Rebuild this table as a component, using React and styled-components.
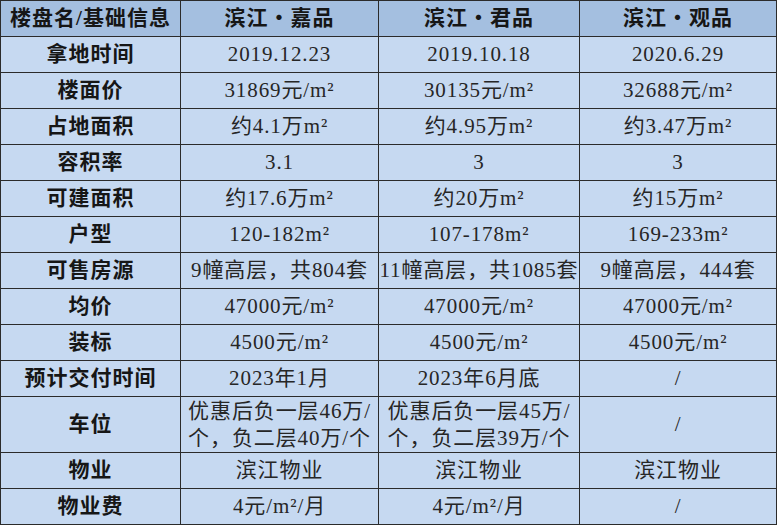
import React from "react";
import styled, { createGlobalStyle } from "styled-components";

const GlobalStyle = createGlobalStyle`
  html, body {
    margin: 0;
    padding: 0;
    background: #ffffff;
  }
`;

const Grid = styled.div`
  display: grid;
  grid-template-columns: 179px 197px 200px 196px;
  grid-template-rows: repeat(11, 35px) 55px 35px 35px;
  gap: 1px;
  padding: 1px;
  width: 777px;
  box-sizing: border-box;
  background: #2b2b2b;
  font-family: "Liberation Serif", "Noto Sans CJK SC", serif;
`;

const Cell = styled.div`
  display: flex;
  align-items: center;
  justify-content: center;
  text-align: center;
  background: ${({ $head }) => ($head ? "#a4bfe0" : "#c6d9f1")};
  color: ${({ $bold }) => ($bold ? "#161616" : "#262626")};
  font-size: ${({ $bold }) => ($bold ? "21px" : "21px")};
  font-weight: ${({ $bold }) => ($bold ? 700 : 400)};
  line-height: 27px;
  white-space: nowrap;
  letter-spacing: ${({ $bold }) => ($bold ? "1px" : "0.9px")};
`;

const Row = styled.div`
  display: contents;
`;

const heads = ["楼盘名/基础信息", "滨江・嘉品", "滨江・君品", "滨江・观品"];

const rows = [
  ["拿地时间", "2019.12.23", "2019.10.18", "2020.6.29"],
  ["楼面价", "31869元/m²", "30135元/m²", "32688元/m²"],
  ["占地面积", "约4.1万m²", "约4.95万m²", "约3.47万m²"],
  ["容积率", "3.1", "3", "3"],
  ["可建面积", "约17.6万m²", "约20万m²", "约15万m²"],
  ["户型", "120-182m²", "107-178m²", "169-233m²"],
  ["可售房源", "9幢高层，共804套", "11幢高层，共1085套", "9幢高层，444套"],
  ["均价", "47000元/m²", "47000元/m²", "47000元/m²"],
  ["装标", "4500元/m²", "4500元/m²", "4500元/m²"],
  ["预计交付时间", "2023年1月", "2023年6月底", "/"],
  [
    "车位",
    ["优惠后负一层46万/", "个，负二层40万/个"],
    ["优惠后负一层45万/", "个，负二层39万/个"],
    "/",
  ],
  ["物业", "滨江物业", "滨江物业", "滨江物业"],
  ["物业费", "4元/m²/月", "4元/m²/月", "/"],
];

const CellText = ({ value }) =>
  Array.isArray(value) ? (
    <span>
      {value[0]}
      <br />
      {value[1]}
    </span>
  ) : (
    value
  );

const App = () => {
  return (
    <>
      <GlobalStyle />
      <Grid>
        {heads.map((h) => (
          <Cell key={h} $head $bold>
            {h}
          </Cell>
        ))}
        {rows.map((row) => (
          <Row key={row[0]}>
            {row.map((v, i) => (
              <Cell key={i} $bold={i === 0}>
                <CellText value={v} />
              </Cell>
            ))}
          </Row>
        ))}
      </Grid>
    </>
  );
};

export default App;
